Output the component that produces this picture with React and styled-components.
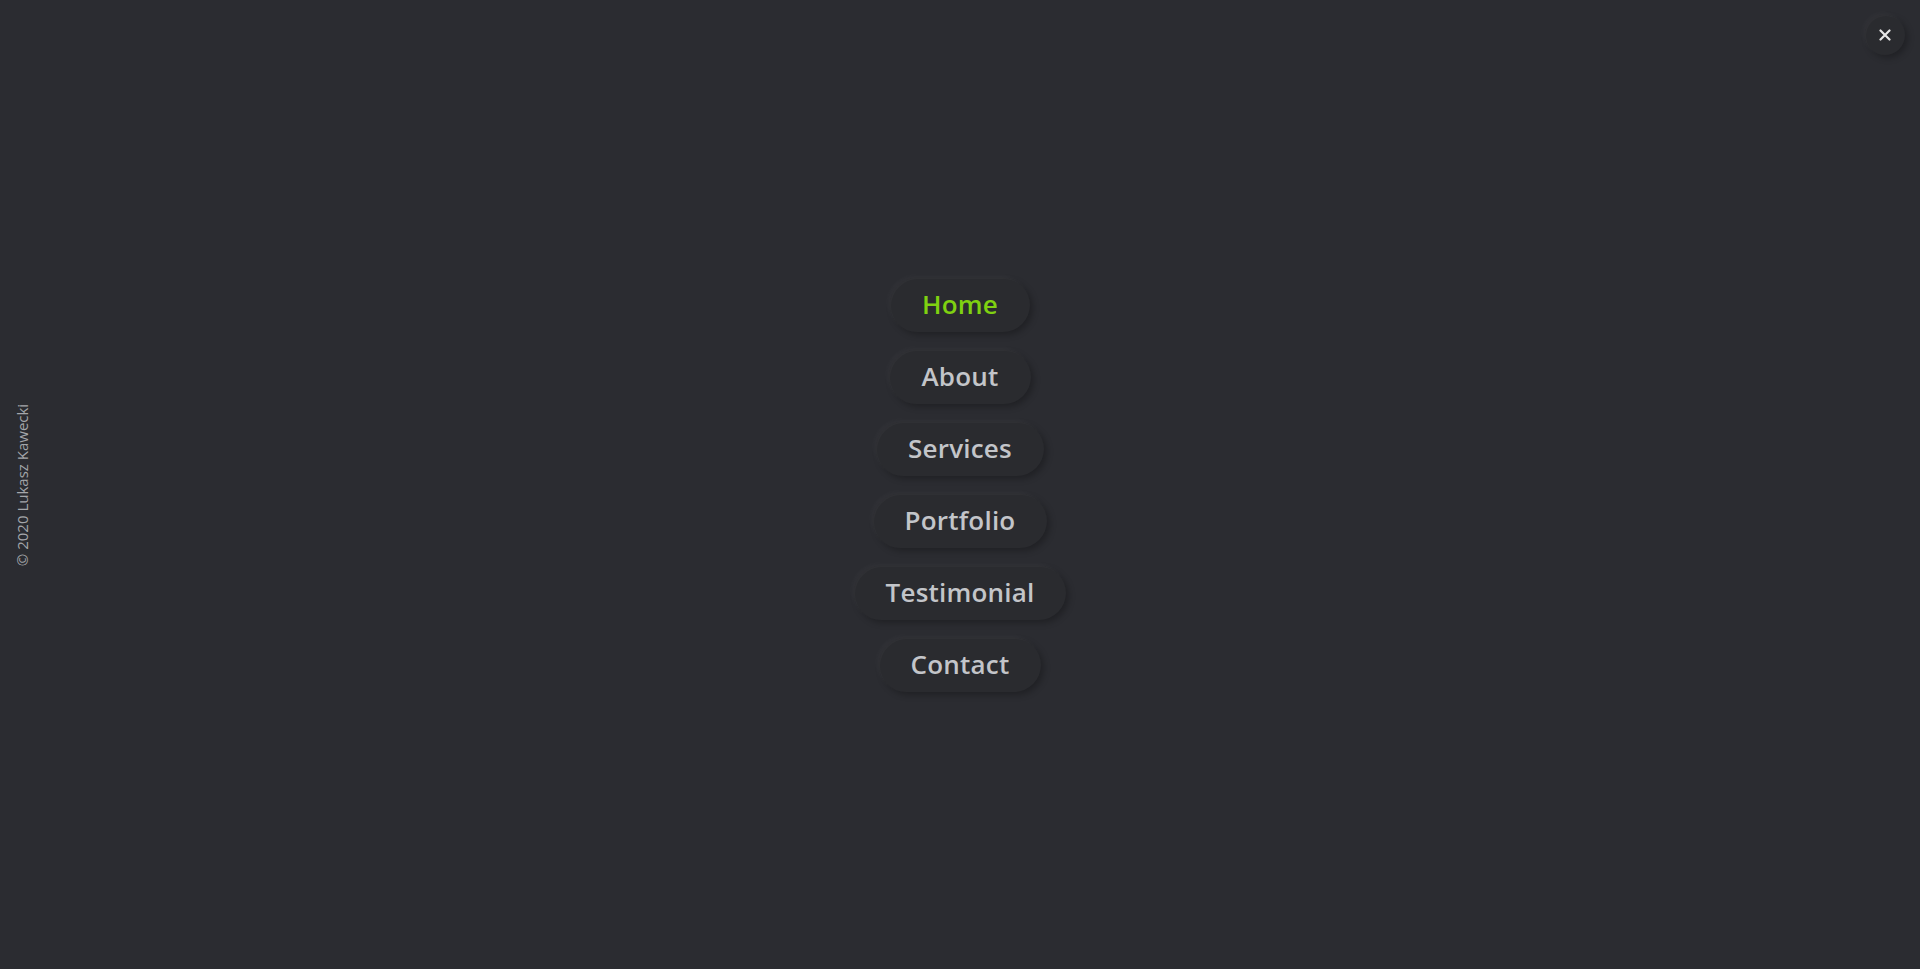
import React from "react";
import styled, { createGlobalStyle } from "styled-components";

const GlobalStyle = createGlobalStyle`
  html, body {
    margin: 0;
    padding: 0;
    background-color: #2b2c31;
  }
  body {
    font-family: "Open Sans", "Lato", sans-serif;
  }
`;

const links = ["Home", "About", "Services", "Portfolio", "Testimonial", "Contact"];

const App = () => {
  const active = "Home";

  return (
    <Page>
      <GlobalStyle />
      <Copyright>© 2020 Lukasz Kawecki</Copyright>
      <CloseBtn aria-label="close">
        <svg width="12" height="12" viewBox="0 0 12 12">
          <path d="M1.5 1.5 L10.5 10.5 M10.5 1.5 L1.5 10.5" stroke="#e8e8e8" strokeWidth="2.2" strokeLinecap="round" />
        </svg>
      </CloseBtn>
      <Menu>
        {links.map((l) => (
          <MenuItem key={l} active={l === active ? "true" : undefined}>
            {l}
          </MenuItem>
        ))}
      </Menu>
    </Page>
  );
};

const Page = styled.div`
  position: relative;
  width: 100%;
  height: 969px;
  background-color: #2b2c31;
  display: flex;
  align-items: center;
  justify-content: center;
  overflow: hidden;
`;

const Menu = styled.nav`
  display: flex;
  flex-direction: column;
  align-items: center;
  gap: 18px;
`;

const MenuItem = styled.a`
  display: inline-block;
  padding: 9px 32px 10px;
  border-radius: 40px;
  font-size: 26px;
  font-weight: 600;
  line-height: 35px;
  letter-spacing: 0.2px;
  color: ${(props) => (props.active ? "#7fd111" : "#c3c5c9")};
  background-color: #2a2b2f;
  box-shadow: -2px -2px 5px rgba(255, 255, 255, 0.035),
    3px 3px 6px rgba(0, 0, 0, 0.25),
    inset 1px 1px 1px rgba(255, 255, 255, 0.03);
  cursor: pointer;
`;

const Copyright = styled.div`
  position: absolute;
  left: 22px;
  top: 50%;
  transform: translate(-50%, -50%) rotate(-90deg);
  white-space: nowrap;
  font-size: 15px;
  color: #a4a6aa;
`;

const CloseBtn = styled.button`
  position: absolute;
  top: 15px;
  right: 15px;
  width: 40px;
  height: 40px;
  border: none;
  border-radius: 50%;
  background-color: #2a2b2f;
  display: flex;
  align-items: center;
  justify-content: center;
  box-shadow: -2px -2px 5px rgba(255, 255, 255, 0.035),
    3px 3px 6px rgba(0, 0, 0, 0.25),
    inset 1px 1px 1px rgba(255, 255, 255, 0.03);
  cursor: pointer;
  padding: 0;
`;

export default App;
